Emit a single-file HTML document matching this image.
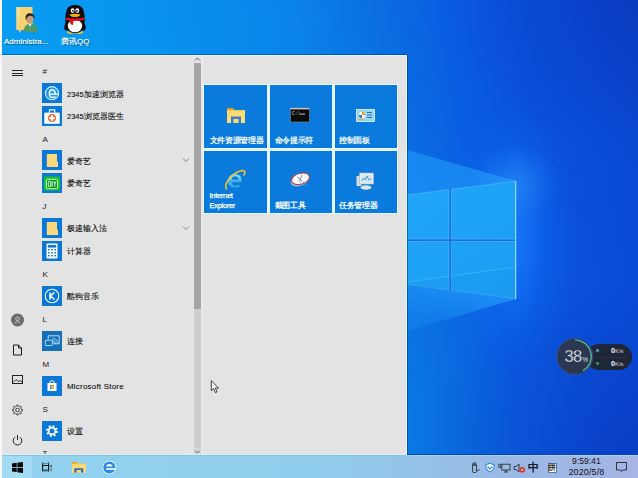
<!DOCTYPE html>
<html><head><meta charset="utf-8">
<style>
*{margin:0;padding:0;box-sizing:border-box}
html,body{width:638px;height:478px;overflow:hidden;font-family:"Liberation Sans",sans-serif}
body{position:relative;background:#0a5ad4}
.a{position:absolute}
#wall{left:0;top:0;width:638px;height:478px;
background:
 radial-gradient(ellipse 45px 40px at 515px 183px, rgba(60,170,255,.35), rgba(60,170,255,0) 100%),
 radial-gradient(ellipse 30px 90px at 516px 240px, rgba(30,130,255,.55), rgba(30,130,255,0) 100%),
 radial-gradient(ellipse 70px 130px at 512px 235px, rgba(15,115,255,.5), rgba(15,115,255,0) 100%),
 radial-gradient(ellipse 200px 160px at 638px 0px, rgba(8,40,170,.35), rgba(8,40,170,0) 100%),
 radial-gradient(ellipse 230px 200px at 638px 478px, rgba(8,40,170,.45), rgba(8,40,170,0) 100%),
 linear-gradient(80deg,#08a0f4 0px,#0898f0 180px,#0a82e8 375px,#0a76e4 420px,#0a64e0 495px,#0a5ce2 525px,#0a50da 600px,#0a4bd6 656px,#0a46cc 711px);}
#menu{left:2px;top:55px;width:405px;height:400px;background:#e3e3e3;border-top:1px solid #dcf8ff;border-right:1px solid #e2faff;box-shadow:0 -1px 0 rgba(10,60,140,.55),1px 0 0 rgba(10,50,140,.6)}
#task{left:0;top:455px;width:638px;height:23px;background:linear-gradient(90deg,#92d2ef 0%,#90cdec 50%,#9ab9e4 80%,#a6b6e6 100%)}
#strip{left:0;top:0;width:2px;height:478px;background:#f7f7f7}
.t{color:#0a0a0a;font-size:7.5px;white-space:nowrap;line-height:10px;-webkit-text-stroke:.1px #0a0a0a}
.h{color:#1a1a1a;font-size:8px;line-height:10px}
.ic{width:20px;height:20px;background:#0a78d6;left:42px}
.tile{background:#0a7bdc}
.tt{color:#fff;font-size:7.5px;line-height:10px;letter-spacing:-.3px;white-space:nowrap;-webkit-text-stroke:.25px #fff}
.tray{color:#111}
</style></head><body>
<div id="wall" class="a"></div>
<svg class="a" style="left:0;top:0" width="638" height="478">
 <defs>
  <linearGradient id="pane" gradientUnits="userSpaceOnUse" x1="407" y1="181" x2="516" y2="299">
   <stop offset="0" stop-color="#22a6f8"/>
   <stop offset=".5" stop-color="#1ea2f6"/>
   <stop offset="1" stop-color="#1c9cf2"/>
  </linearGradient>
  <linearGradient id="beamU" x1="0" y1="0" x2="1" y2="0">
   <stop offset="0" stop-color="#20a0ff" stop-opacity=".55"/>
   <stop offset="1" stop-color="#30b0ff" stop-opacity=".45"/>
  </linearGradient>
  <linearGradient id="beamD" gradientUnits="userSpaceOnUse" x1="455" y1="290" x2="445" y2="325">
   <stop offset="0" stop-color="#28a8ff" stop-opacity=".55"/>
   <stop offset="1" stop-color="#28a8ff" stop-opacity=".2"/>
  </linearGradient>
 </defs>
 <polygon points="407,150 516,181 407,195" fill="url(#beamU)"/>
 <polygon points="407,284 516,299 407,331" fill="url(#beamD)"/>
 <polygon points="407,195 516,181 516,299 407,284" fill="#1572de"/>
 <g fill="url(#pane)" stroke="#62c4ff" stroke-width=".7" stroke-opacity=".7">
  <polygon points="406,195.1 449,189.6 449,239 406,239"/>
  <polygon points="451.5,189.3 516,181 516,239 451.5,239"/>
  <polygon points="406,241.5 449,241.5 449,289.8 406,284"/>
  <polygon points="451.5,241.5 516,241.5 516,299 451.5,290.1"/>
 </g>
 <polygon points="406,284 449,289.8 449,276.5 406,282" fill="#1a94ee" opacity=".35"/>
 <polygon points="451.5,290.1 516,299 516,267 451.5,276" fill="#1a94ee" opacity=".35"/>
 <line x1="406" y1="282" x2="449" y2="276.3" stroke="#40c0ff" stroke-width=".8" opacity=".8"/>
 <line x1="451.5" y1="276" x2="516" y2="267" stroke="#40c0ff" stroke-width=".8" opacity=".8"/>
 <line x1="515.6" y1="181" x2="515.6" y2="299" stroke="#86d8ff" stroke-width="1.1"/>
</svg>

<!-- desktop icons -->
<svg class="a" style="left:14px;top:5px" width="26" height="30" viewBox="0 0 26 30">
 <defs><linearGradient id="adf" x1="0" y1="0" x2="1" y2="1"><stop offset="0" stop-color="#fbe6a0"/><stop offset="1" stop-color="#f0c860"/></linearGradient></defs>
 <path d="M2.5 2 L18.5 2 L18.5 25 L2.5 25Z" fill="#f5d272"/>
 <path d="M2.5 2 L7 4.5 L7 27.5 L2.5 24Z" fill="url(#adf)"/>
 <path d="M9.5 27 Q9.6 19.5 16 18.5 Q23.5 19 24 27.5Z" fill="#4e9a68"/>
 <path d="M14.5 19 L16 22 L17.5 19Z" fill="#e8f0e8"/>
 <ellipse cx="15.8" cy="14.2" rx="3.6" ry="4" fill="#c89a78"/>
 <path d="M11.6 14 Q11 8.3 16 8.3 Q21 8.3 20.6 14.5 Q19.8 11 16.2 10.8 Q13 11 12.2 15Z" fill="#2a2420"/>
</svg>
<div class="a" style="left:4px;top:36.8px;color:#fff;font-size:8px;line-height:10px;-webkit-text-stroke:.15px #fff;text-shadow:1px 1px 1px rgba(0,0,0,.55)">Administra...</div>
<svg class="a" style="left:58px;top:0px" width="36" height="36" viewBox="0 0 36 36">
 <ellipse cx="10" cy="25" rx="3" ry="6" transform="rotate(25 10 25)" fill="#0c0c0c"/>
 <ellipse cx="24" cy="25" rx="3" ry="6" transform="rotate(-25 24 25)" fill="#0c0c0c"/>
 <ellipse cx="13" cy="32.5" rx="4" ry="1.4" fill="#e8c040"/><ellipse cx="21" cy="32.5" rx="4" ry="1.4" fill="#e8c040"/>
 <path d="M17 4.8 Q26 4.8 26.5 15 Q27 22 26 27 Q24 33 17 33 Q10 33 8 27 Q7 22 7.5 15 Q8 4.8 17 4.8Z" fill="#0c0c0c"/>
 <ellipse cx="17" cy="26" rx="7.2" ry="6.3" fill="#fff"/>
 <ellipse cx="14.6" cy="10.6" rx="1.9" ry="2.4" fill="#fff"/><ellipse cx="19.3" cy="10.6" rx="1.9" ry="2.4" fill="#fff"/>
 <circle cx="15" cy="10.9" r=".9" fill="#111"/><circle cx="18.9" cy="10.9" r=".9" fill="#111"/>
 <path d="M11.5 14.4 Q17 13.2 22.5 14.4 Q21 17 17 17 Q13 17 11.5 14.4Z" fill="#f5b000"/>
 <path d="M7.6 17.4 Q17 19.6 26.6 17.4 L26.4 20 Q17 22 7.8 20Z" fill="#e3101c"/>
 <path d="M12 20.4 L15.4 20.8 L15 25 L12.4 24.2Z" fill="#e3101c"/>
</svg>
<div class="a" style="left:61px;top:36.8px;color:#fff;font-size:8px;line-height:10px;-webkit-text-stroke:.15px #fff;text-shadow:1px 1px 1px rgba(0,0,0,.55)">腾讯QQ</div>

<div id="strip" class="a"></div>
<div id="menu" class="a"></div>
<div class="a" style="left:187px;top:56px;width:7px;height:398px;background:#e5e5e5"></div>


<!-- sidebar -->
<div class="a" style="left:12px;top:70px;width:11px;height:1px;background:#222"></div>
<div class="a" style="left:12px;top:72.6px;width:11px;height:1px;background:#222"></div>
<div class="a" style="left:12px;top:75.2px;width:11px;height:1px;background:#222"></div>
<svg class="a" style="left:10px;top:312px" width="16" height="16" viewBox="0 0 16 16">
 <circle cx="7.5" cy="8" r="6.5" fill="#6b6b6b"/>
 <circle cx="7.5" cy="6.8" r="1.8" fill="none" stroke="#ddd" stroke-width=".8"/>
 <path d="M4.8 11.2 Q7.5 8 10.2 11.2" fill="none" stroke="#ddd" stroke-width=".8"/>
</svg>
<svg class="a" style="left:12px;top:344px" width="11" height="12" viewBox="0 0 11 12">
 <path d="M1.5 1 H6.5 L9.5 4 V11 H1.5 Z M6.5 1 V4 H9.5" fill="none" stroke="#1a1a1a" stroke-width="1"/>
</svg>
<svg class="a" style="left:11px;top:374px" width="13" height="11" viewBox="0 0 13 11">
 <rect x="1.5" y="1.5" width="10" height="8" fill="none" stroke="#222" stroke-width="1"/>
 <path d="M2 8.5 L5 5.5 L7.5 7.5 L9 6.5 L11 8" fill="none" stroke="#222" stroke-width=".9"/>
</svg>
<svg class="a" style="left:11px;top:404px" width="13" height="12" viewBox="0 0 13 12">
 <path d="M10.31 5.15 L11.46 5.40 L11.46 6.60 L10.31 6.85 L9.79 8.09 L10.43 9.09 L9.59 9.93 L8.59 9.29 L7.35 9.81 L7.10 10.96 L5.90 10.96 L5.65 9.81 L4.41 9.29 L3.41 9.93 L2.57 9.09 L3.21 8.09 L2.69 6.85 L1.54 6.60 L1.54 5.40 L2.69 5.15 L3.21 3.91 L2.57 2.91 L3.41 2.07 L4.41 2.71 L5.65 2.19 L5.90 1.04 L7.10 1.04 L7.35 2.19 L8.59 2.71 L9.59 2.07 L10.43 2.91 L9.79 3.91Z" fill="none" stroke="#333" stroke-width=".9" stroke-linejoin="round"/>
 <circle cx="6.5" cy="6" r="1.8" fill="none" stroke="#333" stroke-width=".9"/>
</svg>
<svg class="a" style="left:11px;top:434px" width="13" height="12" viewBox="0 0 13 12">
 <path d="M4 3.2 A4.3 4.3 0 1 0 9 3.2" fill="none" stroke="#222" stroke-width="1"/>
 <line x1="6.5" y1="1" x2="6.5" y2="6" stroke="#222" stroke-width="1"/>
</svg>

<!-- list -->
<div class="a h" style="left:42.5px;top:67.3px">#</div>
<div class="a ic" style="top:83px"><svg width="20" height="20" viewBox="0 0 20 20"><circle cx="10" cy="10.2" r="6.6" fill="#2e92ea" stroke="#bdf2ff" stroke-width="1.1"/><path d="M7.2 11.3 H16.4 M7.3 11.3 Q7.2 6.9 10.3 6.9 Q13.2 6.9 13.2 11.3 M7.4 11.5 Q7.8 14.5 10.6 14.5 Q12.6 14.5 13.6 13.5" fill="none" stroke="#d8f8ff" stroke-width="1.6"/></svg></div>
<div class="a t" style="left:67px;top:89.5px">2345加速浏览器</div>
<div class="a ic" style="top:105.5px"><svg width="20" height="20" viewBox="0 0 20 20"><path d="M7.4 6.8 V3.9 H12.8 V6.8" fill="none" stroke="#e8f6ff" stroke-width="1.1"/><rect x="2.3" y="6.6" width="15.4" height="11.2" fill="#fff"/><circle cx="10" cy="12.1" r="4" fill="#e07444"/><rect x="9" y="9.5" width="2" height="5.2" fill="#fff"/><rect x="7.4" y="11.1" width="5.2" height="2" fill="#fff"/></svg></div>
<div class="a t" style="left:67px;top:112px">2345浏览器医生</div>

<div class="a h" style="left:42.5px;top:135.3px">A</div>
<div class="a ic" style="top:150px"><svg width="20" height="20" viewBox="0 0 20 20"><path d="M4.8 4 H15 V11.7 H16 V17 H4.8Z" fill="#fbd97c"/></svg></div>
<div class="a t" style="left:67px;top:156.5px">爱奇艺</div>
<svg class="a" style="left:182px;top:157px" width="8" height="6" viewBox="0 0 8 6"><path d="M1 1.5 L4 4.5 L7 1.5" fill="none" stroke="#666" stroke-width=".8"/></svg>
<div class="a ic" style="top:172.6px"><svg width="20" height="20" viewBox="0 0 20 20"><rect x="2" y="3.6" width="16" height="14" rx="1" fill="#12c224"/><rect x="4.3" y="6.3" width="11.4" height="9.4" rx="1.6" fill="#0a9a1a" stroke="#d8ffd8" stroke-width="1"/><rect x="6.3" y="8.3" width="2.4" height="5.4" rx=".8" fill="none" stroke="#e8ffe8" stroke-width=".9"/><rect x="9.6" y="8.3" width="1" height="5.4" fill="#e8ffe8"/><path d="M11.6 8.3 L12.8 11 L14 8.3 M12.8 11 V13.7" fill="none" stroke="#e8ffe8" stroke-width=".9"/></svg></div>
<div class="a t" style="left:67px;top:179.1px">爱奇艺</div>

<div class="a h" style="left:42.5px;top:202.3px">J</div>
<div class="a ic" style="top:217.7px"><svg width="20" height="20" viewBox="0 0 20 20"><path d="M4.8 4 H15 V11.7 H16 V17 H4.8Z" fill="#fbd97c"/></svg></div>
<div class="a t" style="left:67px;top:224.2px">极速输入法</div>
<svg class="a" style="left:182px;top:225px" width="8" height="6" viewBox="0 0 8 6"><path d="M1 1.5 L4 4.5 L7 1.5" fill="none" stroke="#666" stroke-width=".8"/></svg>
<div class="a ic" style="top:240.5px"><svg width="20" height="20" viewBox="0 0 20 20"><rect x="4.5" y="2.5" width="11" height="15" fill="#fff"/><rect x="5.8" y="4" width="8.4" height="2.6" fill="#0a78d6"/><g fill="#0a78d6"><rect x="6" y="8" width="1.6" height="1.4"/><rect x="9.2" y="8" width="1.6" height="1.4"/><rect x="12.4" y="8" width="1.6" height="1.4"/><rect x="6" y="11" width="1.6" height="1.4"/><rect x="9.2" y="11" width="1.6" height="1.4"/><rect x="12.4" y="11" width="1.6" height="1.4"/><rect x="6" y="14" width="1.6" height="1.4"/><rect x="9.2" y="14" width="1.6" height="1.4"/><rect x="12.4" y="14" width="1.6" height="1.4"/></g></svg></div>
<div class="a t" style="left:67px;top:247px">计算器</div>

<div class="a h" style="left:42.5px;top:270.3px">K</div>
<div class="a ic" style="top:285.5px"><svg width="20" height="20" viewBox="0 0 20 20"><circle cx="10" cy="10" r="6.8" fill="none" stroke="#fff" stroke-width="1.1"/><path d="M8 6.5 V13.5 M12.3 6.5 L8.3 10 L12.5 13.5" fill="none" stroke="#fff" stroke-width="1.5"/></svg></div>
<div class="a t" style="left:67px;top:292px">酷狗音乐</div>

<div class="a h" style="left:42.5px;top:315.3px">L</div>
<div class="a ic" style="top:330.7px;background:#1670b8"><svg width="20" height="20" viewBox="0 0 20 20"><path d="M6.2 8.3 V4.8 H17.2 V12.8 H11.5" fill="none" stroke="#b0e0fa" stroke-width="1" stroke-linejoin="round"/><rect x="3.3" y="9.2" width="7" height="5.4" rx=".8" fill="none" stroke="#b0e0fa" stroke-width="1"/><path d="M10.3 9.6 Q13.5 9.6 13.5 12.8 M10.3 7.6 Q15.5 7.6 15.5 12.8" fill="none" stroke="#b0e0fa" stroke-width=".9"/><circle cx="11" cy="12" r=".7" fill="#b0e0fa"/></svg></div>
<div class="a t" style="left:67px;top:337.2px">连接</div>

<div class="a h" style="left:42.5px;top:360.3px">M</div>
<div class="a ic" style="top:375.7px"><svg width="20" height="20" viewBox="0 0 20 20"><path d="M8 7 V5.5 Q10 3.5 12 5.5 V7" fill="none" stroke="#fff" stroke-width=".9"/><rect x="5.5" y="7" width="9" height="8" fill="#fff"/><rect x="8" y="9" width="1.8" height="1.8" fill="#f25022"/><rect x="10.2" y="9" width="1.8" height="1.8" fill="#7fba00"/><rect x="8" y="11.2" width="1.8" height="1.8" fill="#00a4ef"/><rect x="10.2" y="11.2" width="1.8" height="1.8" fill="#ffb900"/></svg></div>
<div class="a t" style="left:67px;top:382.2px;-webkit-text-stroke:.05px #000;letter-spacing:.2px;color:#000;font-size:8px">Microsoft Store</div>

<div class="a h" style="left:42.5px;top:405.3px">S</div>
<div class="a ic" style="top:420.8px"><svg width="20" height="20" viewBox="0 0 20 20"><circle cx="10" cy="10" r="4.6" fill="none" stroke="#fff" stroke-width="2.6" stroke-dasharray="1.8 1.8"/><circle cx="10" cy="10" r="3.4" fill="none" stroke="#fff" stroke-width="1.8"/></svg></div>
<div class="a t" style="left:67px;top:427.3px">设置</div>
<div class="a h" style="left:42.5px;top:449.3px">T</div>

<!-- scrollbar -->
<div class="a" style="left:201px;top:56px;width:2px;height:398px;background:#e9e9e9"></div>
<div class="a" style="left:194px;top:56px;width:7px;height:399px;background:#cdcdcd"></div>
<div class="a" style="left:194px;top:56px;width:7px;height:7px;background:#e2e2e2"></div>
<div class="a" style="left:194px;top:63px;width:7px;height:246px;background:#a4a4a4"></div>
<div class="a" style="left:194px;top:448px;width:7px;height:7px;background:#d8d8d8"></div>
<svg class="a" style="left:194px;top:56px" width="7" height="7" viewBox="0 0 7 7"><path d="M1 4.5 L3.5 2 L6 4.5" fill="none" stroke="#444" stroke-width=".8"/></svg>
<svg class="a" style="left:194px;top:448px" width="7" height="7" viewBox="0 0 7 7"><path d="M1 2.5 L3.5 5 L6 2.5" fill="none" stroke="#444" stroke-width=".8"/></svg>

<!-- tiles -->
<div class="a" style="left:203px;top:84px;width:195px;height:130px;background:#e6f4fc"></div>
<div class="a tile" style="left:204px;top:85px;width:63px;height:63px"></div>
<div class="a tile" style="left:270px;top:85px;width:62px;height:63px"></div>
<div class="a tile" style="left:335px;top:85px;width:62px;height:63px"></div>
<div class="a tile" style="left:204px;top:151px;width:63px;height:62px"></div>
<div class="a tile" style="left:270px;top:151px;width:62px;height:62px"></div>
<div class="a tile" style="left:335px;top:151px;width:62px;height:62px"></div>

<svg class="a" style="left:226px;top:107px" width="20" height="17" viewBox="0 0 20 17">
 <path d="M1 1.5 H7 L8.5 3 H19 V16 H1Z" fill="#f5c94c"/>
 <rect x="1" y="1" width="6" height="2" fill="#e2a21c"/>
 <rect x="1" y="4" width="18" height="12" fill="#fcdc72"/>
 <path d="M5 16 V9.5 H15 V16 H12.5 V12 H7.5 V16Z" fill="#3a7fc8"/>
</svg>
<svg class="a" style="left:290px;top:107px" width="20" height="16" viewBox="0 0 20 16">
 <rect x=".5" y="1" width="19" height="14" fill="#0b0b0b" stroke="#888" stroke-width=".6"/>
 <rect x=".5" y="1" width="19" height="1.4" fill="#c8c8c8"/>
 <text x="2" y="7.6" font-size="4.6" fill="#ddd" font-family="Liberation Mono">C:\</text>
 <rect x="10" y="6.6" width="5" height=".9" fill="#ddd"/>
</svg>
<svg class="a" style="left:356px;top:109px" width="19" height="13" viewBox="0 0 19 13">
 <rect x=".5" y=".5" width="18" height="12" fill="#9ad4f6" stroke="#e8f6ff" stroke-width=".8"/>
 <circle cx="6" cy="6" r="3.2" fill="#fff"/>
 <path d="M6 6 V2.8 A3.2 3.2 0 0 1 9.2 6Z" fill="#f0a020"/>
 <path d="M6 6 H2.8 A3.2 3.2 0 0 0 6 9.2Z" fill="#2a80c8"/>
 <rect x="11" y="3" width="5" height="1" fill="#2a70b8"/><rect x="11" y="5.5" width="5" height="1" fill="#2a70b8"/><rect x="11" y="8" width="5" height="1" fill="#2a70b8"/>
 <rect x="2" y="10.2" width="6" height="1" fill="#e8a818"/>
</svg>
<div class="a tt" style="left:209.5px;top:136.1px">文件资源管理器</div>
<div class="a tt" style="left:274.5px;top:136.1px">命令提示符</div>
<div class="a tt" style="left:339px;top:136.1px">控制面板</div>

<svg class="a" style="left:224px;top:169px" width="22" height="22" viewBox="0 0 22 22">
 <defs><linearGradient id="ieg" x1="0" y1="0" x2="0" y2="1"><stop offset="0" stop-color="#8ee0ff"/><stop offset="1" stop-color="#1ea0e8"/></linearGradient></defs>
 <path d="M4.6 12.2 H17.6 Q18 5 11.2 5 Q4 5 4 12 Q4 19 11.2 19 Q15.2 19 17.4 16 H13.2 Q12.3 16.4 11.2 16.4 Q8 16.4 7.8 13.6 H17.6 V12.2Z M7.9 10.4 Q8.3 7.6 11.2 7.6 Q14.1 7.6 14.4 10.4Z" fill="url(#ieg)" fill-rule="evenodd" stroke="#1478c8" stroke-width=".3"/>
 <path d="M3 20.5 Q-.5 17 5.5 9.5 Q12 2 19 1.5 Q22.5 2 19.5 6.5" fill="none" stroke="#f5c52a" stroke-width="1.6"/>
</svg>
<div class="a tt" style="left:209.5px;top:191.3px">Internet</div>
<div class="a tt" style="left:209.5px;top:201.3px">Explorer</div>
<svg class="a" style="left:290px;top:171px" width="22" height="18" viewBox="0 0 22 18">
 <ellipse cx="9.5" cy="10" rx="9" ry="5" transform="rotate(-16 9.5 10)" fill="#9ab4e4"/>
 <ellipse cx="10.5" cy="7.8" rx="9.2" ry="5.4" transform="rotate(-16 10.5 7.8)" fill="#fafafa" stroke="#c83838" stroke-width="1"/>
 <path d="M7 5.5 L12.5 10.5 M12 4 L9.5 10.5" stroke="#666" stroke-width=".7"/>
 <path d="M12.5 10.5 L18 15 M10 11 L12 15" stroke="#4aa8e8" stroke-width=".7"/>
</svg>
<svg class="a" style="left:355px;top:171px" width="21" height="20" viewBox="0 0 21 20">
 <rect x="1.5" y="5" width="5" height="10" fill="#d8dde2"/>
 <rect x="4.5" y="2" width="14" height="11" fill="#e8eef2" stroke="#aeb6bc" stroke-width=".6"/>
 <rect x="6" y="3.5" width="11" height="8" fill="#cfe8f6"/>
 <path d="M6.5 10 L9 7 L10.5 9 L12 5 L14 9 L16.5 8" fill="none" stroke="#2a7ab8" stroke-width=".7"/>
 <ellipse cx="11" cy="16.5" rx="5.5" ry="2.2" fill="#dfe4e8"/>
</svg>
<div class="a tt" style="left:274.5px;top:201.1px">截图工具</div>
<div class="a tt" style="left:339px;top:201.1px">任务管理器</div>

<!-- cursor -->
<svg class="a" style="left:210px;top:380px" width="11" height="14" viewBox="0 0 11 14">
 <path d="M1.3 .8 V10.6 L3.6 8.5 L5.4 12.6 L7 11.9 L5.3 8 H8.6 Z" fill="#fff" stroke="#111" stroke-width=".8"/>
</svg>

<!-- widget -->
<div class="a" style="left:586px;top:344px;width:46px;height:26px;border-radius:13px;background:#1e2638"></div>
<div class="a" style="left:592px;top:356.5px;width:34px;height:1px;background:#283044"></div>
<svg class="a" style="left:556px;top:337px" width="38" height="39" viewBox="0 0 38 39">
 <circle cx="19" cy="19.5" r="18" fill="#2b3650" stroke="#44506a" stroke-width=".8"/>
 <path d="M19 3 A16.5 16.5 0 0 1 27 33.8" fill="none" stroke="#4cc8a8" stroke-width="1.2"/>
</svg>
<svg class="a" style="left:560px;top:345px" width="32" height="22" viewBox="0 0 32 22">
 <text x="4.5" y="17.3" font-family="Liberation Sans" font-size="16.5" letter-spacing="-.6" fill="#f4f6fa" stroke="#2b3650" stroke-width=".3">38</text>
 <text x="22.3" y="17" font-family="Liberation Sans" font-size="6.5" fill="#e0e4ea">%</text>
</svg>
<svg class="a" style="left:595px;top:348px" width="5" height="5" viewBox="0 0 5 5"><path d="M2.5 .5 L4.5 3.5 H.5Z" fill="#5ab8f0"/></svg>
<svg class="a" style="left:595px;top:361px" width="5" height="5" viewBox="0 0 5 5"><path d="M2.5 4.5 L4.5 1.5 H.5Z" fill="#30c050"/></svg>
<div class="a" style="left:611px;top:347px;color:#fff;font-size:7px;line-height:8px;font-weight:bold">0<span style="font-weight:normal;font-size:6px;color:#d8d8d8">K/s</span></div>
<div class="a" style="left:611px;top:360px;color:#fff;font-size:7px;line-height:8px;font-weight:bold">0<span style="font-weight:normal;font-size:6px;color:#d8d8d8">K/s</span></div>

<!-- taskbar -->
<div id="task" class="a"></div>
<div class="a" style="left:2px;top:454px;width:405px;height:1px;background:#d6f0f8"></div>
<div class="a" style="left:407px;top:454px;width:231px;height:1px;background:#0a46a8"></div>
<div class="a" style="left:0;top:455px;width:407px;height:1px;background:#8cc6de"></div>
<div class="a" style="left:407px;top:455px;width:231px;height:1px;background:#a8d0fa"></div>
<div class="a" style="left:0;top:456px;width:32px;height:22px;background:#a4dbf4"></div>
<svg class="a" style="left:12px;top:462px" width="11" height="11" viewBox="0 0 11 11">
 <path d="M0 1.5 L4.7 .8 V5 H0Z M5.4 .7 L11 0 V5 H5.4Z M0 5.7 H4.7 V10 L0 9.4Z M5.4 5.7 H11 V11 L5.4 10.2Z" fill="#000"/>
</svg>
<svg class="a" style="left:41px;top:462px" width="12" height="11" viewBox="0 0 12 11">
 <rect x="1" y=".5" width="1.1" height="9" fill="#111"/><rect x="7" y=".5" width="1.1" height="9" fill="#111"/>
 <rect x="1" y="3" width="7.1" height="1" fill="#111"/><rect x="1" y="7.6" width="7.1" height="1" fill="#111"/>
 <rect x="1" y="1.2" width="7.1" height=".9" fill="#4a7a8a"/><rect x="1" y="8.6" width="7.1" height=".9" fill="#4a7a8a"/>
 <rect x="9.5" y="3.2" width="1.3" height="1.4" fill="#000"/><rect x="9.6" y="5.4" width="1.1" height="4" fill="#4a7a8a"/>
</svg>
<svg class="a" style="left:72px;top:462px" width="14" height="11" viewBox="0 0 14 11">
 <path d="M0 0 H5.5 L6.5 1.5 H14 V10.5 H0Z" fill="#f5c94c"/>
 <rect x="0" y="0" width="5" height="1.5" fill="#e2a21c"/>
 <rect x="0" y="2.2" width="14" height="8.3" fill="#fcd874"/>
 <path d="M2.3 10.5 V6.2 H11.3 V10.5 H9 V8 H4.6 V10.5Z" fill="#2f72b0"/>
</svg>
<svg class="a" style="left:102px;top:460px" width="15" height="15" viewBox="0 0 15 15">
 <circle cx="7.3" cy="7.4" r="6.8" fill="#e8f6ff"/>
 <circle cx="7.3" cy="7.4" r="6" fill="#2a8ae6"/>
 <path d="M4 6.6 Q4.4 4 7.3 4 Q10.2 4 10.6 6.6Z" fill="#fff"/>
 <rect x="4.2" y="8.2" width="9.5" height="1.6" fill="#fff"/>
</svg>

<!-- tray -->
<svg class="a" style="left:470px;top:462px" width="11" height="11" viewBox="0 0 11 11">
 <path d="M3 1 H6 V3 H3Z M2.5 3 H6.5 V9.5 Q6.5 10.5 5 10.5 H4 Q2.5 10.5 2.5 9.5Z" fill="none" stroke="#222" stroke-width=".8"/>
 <path d="M6.5 8.5 Q9 9.5 9.5 7" fill="none" stroke="#222" stroke-width=".7"/>
</svg>
<svg class="a" style="left:484px;top:462px" width="12" height="11" viewBox="0 0 12 11">
 <path d="M6 .5 L11 2.5 Q11 8 6 10.5 Q1 8 1 2.5Z" fill="#2a8ae8"/>
 <path d="M6 1.8 L9.8 3.3 Q9.8 7.3 6 9.3 Q2.2 7.3 2.2 3.3Z" fill="#fff"/>
 <path d="M3.5 4.5 L6 7 L8.5 4.5" fill="none" stroke="#2a8ae8" stroke-width="1.1"/>
</svg>
<svg class="a" style="left:498px;top:463px" width="13" height="10" viewBox="0 0 13 10">
 <rect x="3.8" y="1.2" width="8.2" height="5.8" fill="none" stroke="#222" stroke-width=".8"/>
 <path d="M6 9 H10 M8 7 V9" stroke="#222" stroke-width=".8"/>
 <rect x=".8" y="1.2" width="2" height="3.2" fill="none" stroke="#222" stroke-width=".7"/>
</svg>
<svg class="a" style="left:513px;top:463px" width="13" height="10" viewBox="0 0 13 10">
 <path d="M1 3.5 H3 L6 1 V9 L3 6.5 H1Z" fill="none" stroke="#222" stroke-width=".8"/>
 <circle cx="9.2" cy="6.8" r="2.8" fill="#e02828"/>
 <path d="M8 5.6 L10.4 8 M10.4 5.6 L8 8" stroke="#fff" stroke-width=".8"/>
</svg>
<div class="a tray" style="left:528.3px;top:460.5px;font-size:10.5px;line-height:12px;color:#0c1430;-webkit-text-stroke:.45px #0c1430">中</div>
<div class="a" style="left:547.5px;top:462.5px;width:9.5px;height:10px;background:#fff;border:1px solid #587aa6"></div>
<div class="a" style="left:547.5px;top:462.5px;width:9.5px;font-size:8px;line-height:10px;color:#000;text-align:center;-webkit-text-stroke:.15px #000">拼</div>
<div class="a tray" style="left:572px;top:456px;font-size:8.6px;line-height:10px;letter-spacing:0px">9:59:41</div>
<div class="a tray" style="left:568.5px;top:467px;font-size:9px;line-height:10px;letter-spacing:.1px">2020/5/8</div>
<svg class="a" style="left:615px;top:461px" width="13" height="12" viewBox="0 0 13 12">
 <path d="M1.5 1.5 H11.5 V9 H7.5 L6.5 10.5 L5.5 9 H1.5Z" fill="none" stroke="#222" stroke-width=".9"/>
</svg>
<div id="strip2" class="a" style="left:0;top:0;width:2px;height:478px;background:#f7f7f7"></div>
</body></html>
